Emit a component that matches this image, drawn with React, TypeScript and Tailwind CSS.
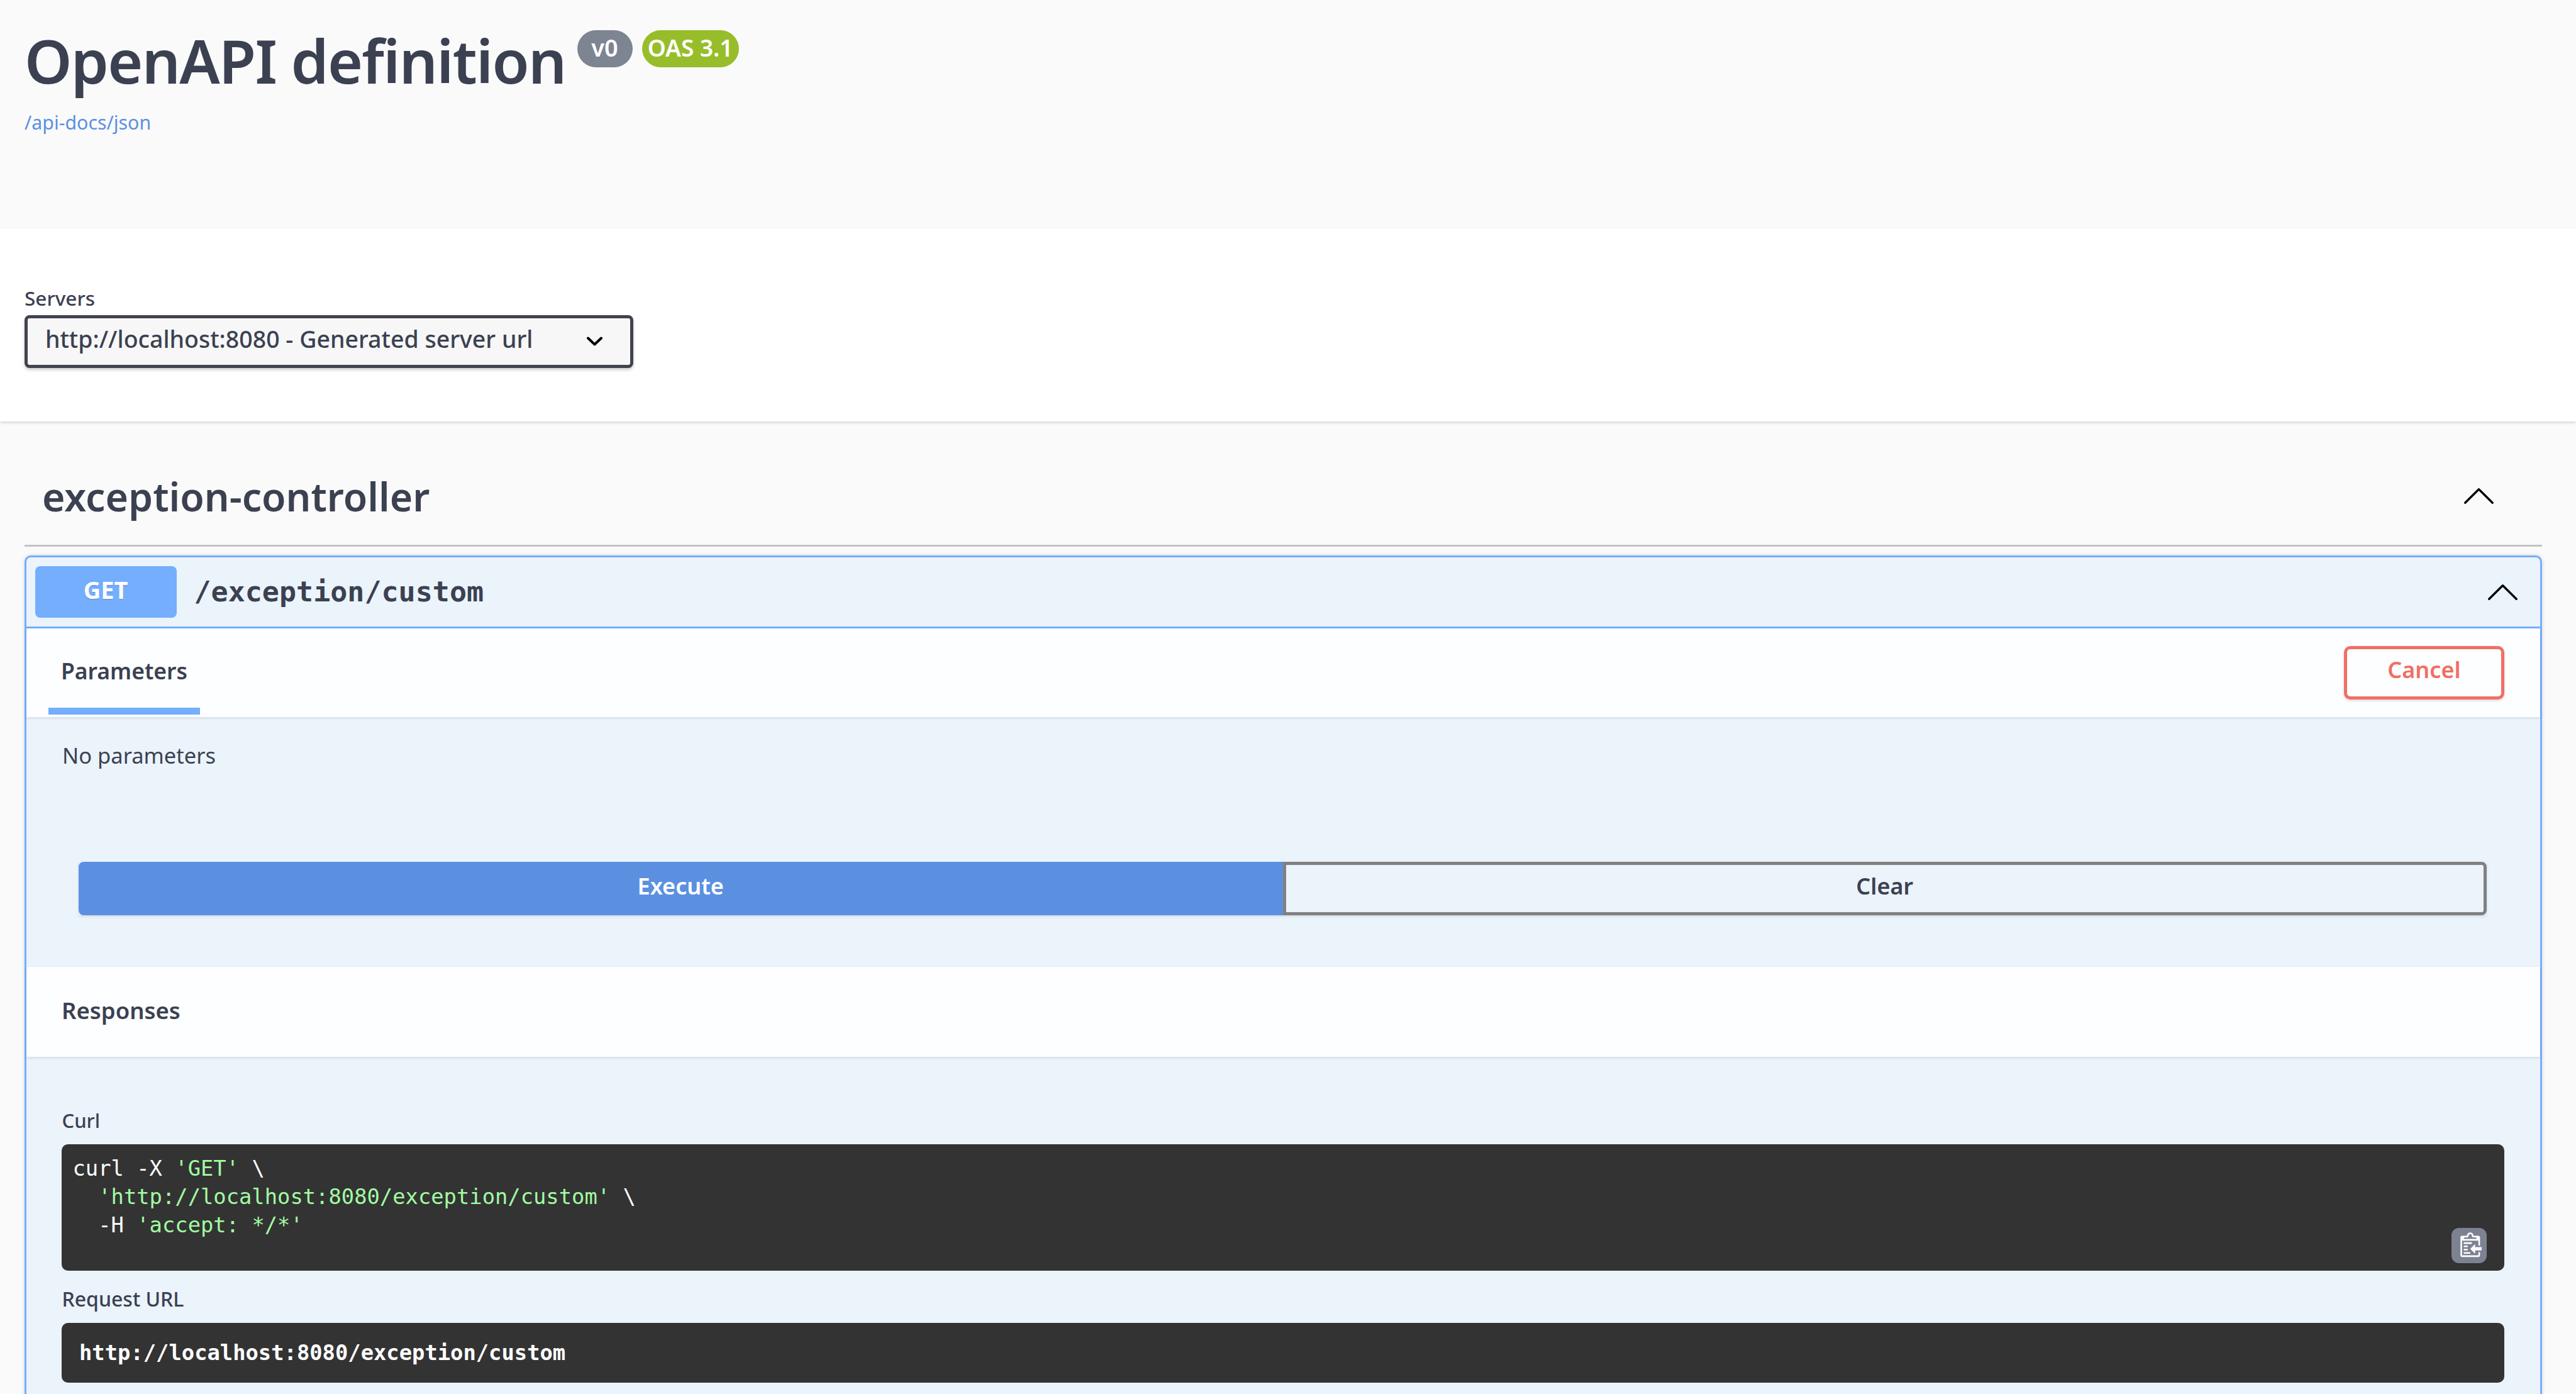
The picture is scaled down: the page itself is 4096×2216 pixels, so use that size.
const sans = "font-['Noto_Sans','Liberation_Sans',sans-serif]";
const mono = "font-['DejaVu_Sans_Mono','Liberation_Mono',monospace]";

function Chevron() {
  return (
    <svg viewBox="0 0 47 25" className="h-[25px] w-[47px]" fill="none" stroke="#000" strokeWidth="3.4" strokeLinecap="round" strokeLinejoin="round">
      <polyline points="1.8,23.2 23.5,1.8 45.2,23.2" />
    </svg>
  );
}

function CopyIcon() {
  return (
    <svg viewBox="0 0 15 16" className="h-[42px] w-[39px]">
      <g transform="translate(2, -1)">
        <path
          fill="#ffffff"
          fillRule="evenodd"
          d="M2 13h4v1H2v-1zm5-6H2v1h5V7zm2 3V8l-3 3 3 3v-2h5v-2H9zM4.5 9H2v1h2.5V9zM2 12h2.5v-1H2v1zm9 1h1v2c-.02.28-.11.52-.3.7-.19.18-.42.28-.7.3H1c-.55 0-1-.45-1-1V4c0-.55.45-1 1-1h3c0-1.11.89-2 2-2 1.11 0 2 .89 2 2h3c.55 0 1 .45 1 1v5h-1V6H1v9h10v-2zM2 5h8c0-.55-.45-1-1-1H8c-.55 0-1-.45-1-1s-.45-1-1-1-1 .45-1 1-.45 1-1 1H3c-.55 0-1 .45-1 1z"
        />
      </g>
    </svg>
  );
}

export default function App() {
  return (
    <div className={`h-[2216px] w-full overflow-hidden bg-[#fafafa] text-[#3b4151] ${sans}`}>
      {/* Info header */}
      <header className="h-[363px] pl-[39px] pt-[46px]">
        <div className="flex items-start">
          <h1 className="text-[96px] font-semibold leading-[100px] tracking-[-1.7px]">OpenAPI definition</h1>
          <span className="ml-[18px] mt-[1.5px] flex h-[59px] w-[88px] items-center justify-center rounded-[30px] bg-[#7d8492] pb-[4px] text-[38px] font-semibold leading-none text-white">v0</span>
          <span className="ml-[15px] mt-[1.5px] flex h-[59px] w-[154px] items-center justify-center rounded-[30px] bg-[#98bd2a] pb-[4px] text-[37px] font-semibold leading-none text-white">OAS 3.1</span>
        </div>
        <a className="mt-[33px] block text-[30.3px] leading-[32px] text-[#5b90e1]">/api-docs/json</a>
      </header>

      {/* Servers */}
      <section className="relative z-10 h-[307px] bg-white pl-[39px] pt-[95px] shadow-[0_2px_4px_rgba(0,0,0,0.15)]">
        <label className="block text-[31.5px] font-medium leading-[32px]">Servers</label>
        <div className="mt-[10.6px] flex h-[84.4px] w-[968px] items-center justify-between rounded-[8px] border-[5px] border-[#41444e] bg-[#f7f7f7] pb-[8px] pl-[28px] pr-[43px] text-[37.5px] font-medium shadow-[0_3px_5px_rgba(0,0,0,0.2)]">
          <span>http://localhost:8080 - Generated server url</span>
          <svg viewBox="0 0 27 15" className="mt-[8px] h-[15px] w-[27px]" fill="none" stroke="#000" strokeWidth="4" strokeLinecap="round" strokeLinejoin="round">
            <polyline points="3,2.5 13.5,12.5 24,2.5" />
          </svg>
        </div>
      </section>

      <main className="pl-[39px] pr-[54px]">
        {/* Tag */}
        <div className="flex h-[199px] items-center justify-between border-b-[3px] border-[#c1c2c8] pl-[28px] pr-[77px] pt-[41px]">
          <h3 className="text-[62.5px] font-semibold leading-[63px]">exception-controller</h3>
          <Chevron />
        </div>

        {/* Operation */}
        <div className="mt-[14px] rounded-t-[10px] border-[3px] border-[#74aefd] bg-[#ebf3fb] shadow-[0_0_6px_rgba(0,0,0,0.15)]">
          <div className="flex h-[113px] items-center border-b-[3px] border-[#74aefd] pl-[13.5px] pr-[36px]">
            <span className="flex h-[81.5px] w-[225px] items-center justify-center rounded-[8px] bg-[#74aefd] pb-[8px] text-[38px] font-bold text-white [text-shadow:0_2px_0_rgba(0,0,0,0.1)]">GET</span>
            <span className={`ml-[28px] flex-1 text-[45px] font-bold ${mono}`}>/exception/custom</span>
            <Chevron />
          </div>

          <div className="relative z-10 flex h-[140.5px] items-center justify-between bg-[#fdfeff] pl-[35px] pr-[57px] shadow-[0_2px_4px_rgba(0,0,0,0.1)]">
            <div className="flex h-full w-[241px] flex-col pt-[46.5px] text-center">
              <span className="text-[35.5px] font-semibold leading-[40px]">Parameters</span>
              <span className="mb-[4px] mt-auto h-[11px] bg-[#74aefd]" />
            </div>
            <button className="h-[84.6px] w-[255px] rounded-[10px] border-[5.5px] border-[#f06f65] pb-[8px] text-[36px] font-semibold text-[#f06f65] shadow-[0_2px_4px_rgba(0,0,0,0.15)]">Cancel</button>
          </div>

          <div className="pb-[82px] pl-[57px] pr-[85px] pt-[41px]">
            <p className="text-[34.5px] leading-[40px]">No parameters</p>
            <div className="ml-[26px] mt-[149.6px] flex h-[85px] shadow-[0_2px_4px_rgba(0,0,0,0.1)]">
              <button className="w-1/2 rounded-l-[8px] bg-[#5b90e1] pb-[8px] text-[36px] font-semibold text-white">Execute</button>
              <button className="w-1/2 rounded-r-[8px] border-[5.6px] border-[#808080] pb-[8px] text-[36px] font-semibold">Clear</button>
            </div>
          </div>

          <div className="relative z-10 flex h-[143px] items-center bg-[#fdfeff] pb-[6px] pl-[56px] shadow-[0_2px_4px_rgba(0,0,0,0.1)]">
            <span className="text-[36.5px] font-semibold leading-[40px]">Responses</span>
          </div>

          <div className="pb-[60px] pl-[55.5px] pr-[57px] pt-[85px]">
            <div className="pl-[1px] text-[31px] font-medium leading-[32px]">Curl</div>
            <div className={`relative mt-[22px] h-[201.4px] rounded-[10px] bg-[#333333] pl-[18px] pt-[16px] text-[33.8px] font-normal leading-[45px] text-white ${mono}`}>
              <pre className={mono}>
                <span>curl -X </span><span className="text-[#a2fca2]">'GET'</span><span> \</span>{"\n"}
                <span>  </span><span className="text-[#a2fca2]">'http://localhost:8080/exception/custom'</span><span> \</span>{"\n"}
                <span>  -H </span><span className="text-[#a2fca2]">'accept: */*'</span>
              </pre>
              <button className="absolute bottom-[12.5px] right-[28px] flex h-[56px] w-[56px] items-center justify-center rounded-[12px] bg-[#7d8293]">
                <CopyIcon />
              </button>
            </div>
            <div className="mt-[29px] pl-[1px] text-[32px] font-medium leading-[32px]">Request URL</div>
            <div className={`mt-[22px] flex h-[95px] items-center rounded-[10px] bg-[#333333] pl-[28.5px] text-[33.8px] font-bold text-white ${mono}`}>
              http://localhost:8080/exception/custom
            </div>
          </div>
        </div>
      </main>
    </div>
  );
}
